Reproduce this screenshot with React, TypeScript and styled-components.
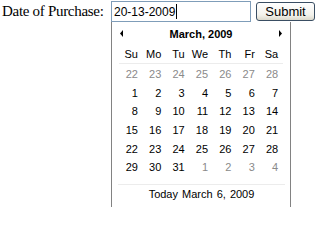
import React, {FC} from "react";
import styled, {createGlobalStyle} from "styled-components";

const GlobalStyle = createGlobalStyle`
    html, body {
        margin: 0;
        background: #ffffff;
        color: #000000;
    }
`;

const Form = styled.form`
    display: grid;
    grid-template-columns: 104px 140px 59px;
    column-gap: 5px;
    align-items: start;
    padding: 1px 0 0 2px;
`;

const Label = styled.label`
    font-family: "Liberation Serif", "Times New Roman", serif;
    font-size: 15px;
    line-height: 20px;
    letter-spacing: -0.3px;
    white-space: nowrap;
`;

const TextBox = styled.div`
    box-sizing: border-box;
    height: 21px;
    border: 1px solid #7f9db9;
    padding: 0 0 0 2px;
    display: flex;
    align-items: center;
    font-family: "Liberation Sans", Arial, sans-serif;
    font-size: 12px;
    background: #fff;
`;

const Caret = styled.span`
    display: inline-block;
    width: 1px;
    height: 15px;
    margin-left: 1px;
    background: #000;
`;

const SubmitButton = styled.button`
    box-sizing: border-box;
    margin-top: 1px;
    width: 59px;
    height: 19px;
    padding: 0;
    border: 1px solid #3a4e63;
    border-radius: 3px;
    background: linear-gradient(#ffffff, #f3f2ec 70%, #dcd9cc);
    font-family: "Liberation Sans", Arial, sans-serif;
    font-size: 13px;
    color: #000;
`;

/* popup is cut off by the bottom of the window, so no bottom edge */
const Calendar = styled.div`
    grid-column: 2 / span 2;
    justify-self: start;
    box-sizing: border-box;
    width: 180px;
    height: 185px;
    border: 1px solid #828282;
    border-top: none;
    border-bottom: none;
    background: #fff;
    font-family: "Liberation Sans", Tahoma, sans-serif;
    font-size: 11px;
`;

const Header = styled.div`
    display: flex;
    align-items: center;
    justify-content: space-between;
    height: 23px;
    padding: 0 8px;
`;

const MonthTitle = styled.span`
    font-weight: bold;
`;

const Grid = styled.div<{ $divider?: boolean }>`
    display: grid;
    grid-template-columns: repeat(7, 23.4px);
    grid-auto-rows: ${p => (p.$divider ? "18px" : "18.6px")};
    margin: 0 7px 0 6.5px;
    border-bottom: ${p => (p.$divider ? "1px solid #ececec" : "none")};
    padding-top: ${p => (p.$divider ? "0" : "1px")};
`;

const Cell = styled.span<{ $muted?: boolean }>`
    display: flex;
    align-items: center;
    justify-content: flex-end;
    padding-right: 4px;
    color: ${p => (p.$muted ? "#8a8a8a" : "#000")};
`;

const Footer = styled.div`
    margin: 7px 5px 0 6px;
    border-top: 1px solid #ececec;
    height: 19px;
    display: flex;
    align-items: center;
    justify-content: center;
    word-spacing: 1px;
`;

const Arrow: FC<{ dir: "left" | "right" }> = ({dir}) => (
    <svg width="4" height="7" viewBox="0 0 4 7">
        {dir === "left"
            ? <path d="M3 0 L0 3.5 L3 7 Z" fill="#000"/>
            : <path d="M1 0 L4 3.5 L1 7 Z" fill="#000"/>}
    </svg>
);

const dayNames = ["Su", "Mo", "Tu", "We", "Th", "Fr", "Sa"];

const days: { n: number; muted?: boolean }[] = [
    ...[22, 23, 24, 25, 26, 27, 28].map(n => ({n, muted: true})),
    ...Array.from({length: 31}, (_, i) => ({n: i + 1})),
    ...[1, 2, 3, 4].map(n => ({n, muted: true})),
];

const App: FC = () => (
    <>
        <GlobalStyle/>
        <Form onSubmit={e => e.preventDefault()}>
            <Label>Date of Purchase:</Label>
            <TextBox>20-13-2009<Caret/></TextBox>
            <SubmitButton type="submit">Submit</SubmitButton>
            <Calendar>
                <Header>
                    <Arrow dir="left"/>
                    <MonthTitle>March, 2009</MonthTitle>
                    <Arrow dir="right"/>
                </Header>
                <Grid $divider>
                    {dayNames.map(d => <Cell key={d}>{d}</Cell>)}
                </Grid>
                <Grid>
                    {days.map((d, i) => <Cell key={i} $muted={d.muted}>{d.n}</Cell>)}
                </Grid>
                <Footer>Today March 6, 2009</Footer>
            </Calendar>
        </Form>
    </>
);

export default App;
